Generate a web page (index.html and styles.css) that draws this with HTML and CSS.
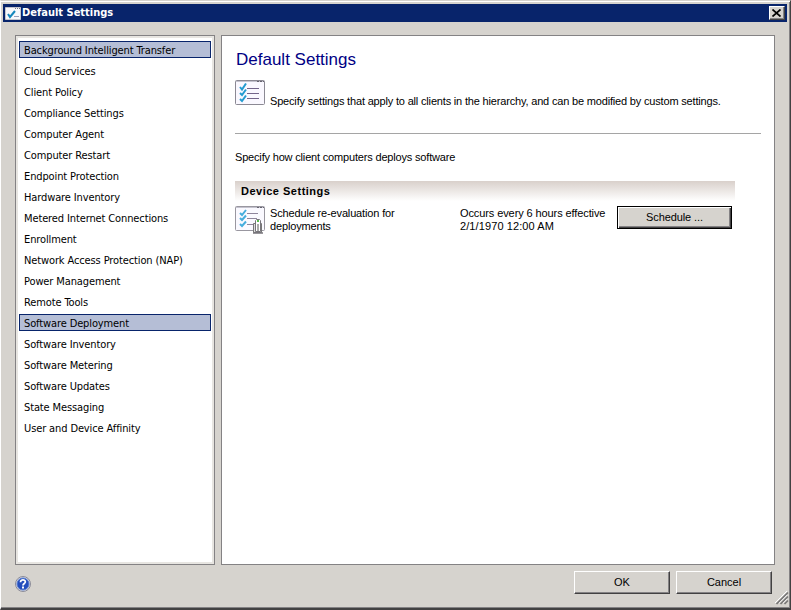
FILE: index.html
```
<!DOCTYPE html>
<html lang="en">
<head>
<meta charset="utf-8">
<title>Default Settings</title>
<link rel="stylesheet" href="styles.css">
</head>
<body>
<div class="window">
  <header class="titlebar">
    <svg class="title-icon" width="16" height="13" viewBox="0 0 16 13"><path fill="#f8f8fc" stroke="#c5c5cd" d="M.5.5h15v12H.5z"/><path stroke="#777986" stroke-dasharray="1 1" d="M10 1.5h5"/><path stroke="#9ba1bd" d="M9 9.5h5"/><path fill="none" stroke="#1687bd" stroke-width="2" d="m3 7 2 3 5-6"/></svg>
    <h1>Default Settings</h1>
    <button class="close" aria-label="Close"><svg width="9" height="8" viewBox="0 0 9 8"><path stroke="#000" stroke-width="1.7" d="m.5.5 8 7m0-7-8 7"/></svg></button>
  </header>
  <div class="body">
    <nav class="sidebar">
      <ul>
        <li class="selected">Background Intelligent Transfer</li>
        <li>Cloud Services</li><li>Client Policy</li><li>Compliance Settings</li><li>Computer Agent</li><li>Computer Restart</li><li>Endpoint Protection</li><li>Hardware Inventory</li><li>Metered Internet Connections</li><li>Enrollment</li><li>Network Access Protection (NAP)</li><li>Power Management</li><li>Remote Tools</li>
        <li class="selected">Software Deployment</li>
        <li>Software Inventory</li><li>Software Metering</li><li>Software Updates</li><li>State Messaging</li><li>User and Device Affinity</li>
      </ul>
    </nav>
    <main class="content">
      <h2>Default Settings</h2>
      <div class="intro">
        <svg width="30" height="26" viewBox="0 0 30 26"><rect x=".5" y=".5" width="29" height="24" rx="1" fill="#faf8ff" stroke="#8b8994"/><path stroke="#c4c3ce" d="M1 1.500h28"/><path stroke="#65636f" stroke-dasharray="2 1" d="M22 1.500h7"/><path stroke="#73658a" d="M12 8.500h12M12 13.500h12M12 18.500h12"/><path fill="none" stroke="#249bd0" stroke-width="2" d="m5 7 2 2.500 4-6M5 13l2 2 4-5.500M5 19l2 2 4-5.500"/></svg>
        <p>Specify settings that apply to all clients in the hierarchy, and can be modified by custom settings.</p>
      </div>
      <p class="description">Specify how client computers deploys software</p>
      <section class="settings">
        <h3>Device Settings</h3>
        <div class="row">
          <svg width="31" height="29" viewBox="0 0 31 29"><rect x=".5" y=".5" width="29" height="24" rx="1" fill="#faf9ff" stroke="#9997a0"/><path stroke="#c4c3ce" d="M1 1.500h28"/><path stroke="#65636f" stroke-dasharray="2 1" d="M22 1.500h7"/><path stroke="#8e859c" d="M12 7.500h11M12 12.500h10M12 18.500h6"/><path fill="none" stroke="#45addd" stroke-width="2" d="m5 7 2 2 4-5M5 12l2 2 4-4.500M5 18l2 2 4-4.500"/><path fill="#ddd" stroke="#777" d="M18.500 26.500v-9h8v9z"/><path fill="#fff" stroke="#77757b" d="M20.500 25.500v-11l1-1h3l1 1v11z"/><path fill="#55bb49" d="M22 14h2v2h-2z"/><path stroke="#aaa" stroke-width="2" d="M23 18v7"/><path stroke="#77757b" stroke-width="1.500" d="M18 27h10"/></svg>
          <p class="label">Schedule re-evaluation for<br>deployments</p>
          <p class="value"><span>Occurs every 6 hours effective</span><br><span class="date">2/1/1970 12:00 AM</span></p>
          <button class="btn schedule">Schedule ...</button>
        </div>
      </section>
    </main>
  </div>
  <footer>
    <svg class="help" width="16" height="16" viewBox="0 0 16 16"><circle cx="8" cy="8" r="7.500" fill="#d9dbe5" stroke="#8c8c98"/><circle cx="8" cy="8" r="6" fill="#244ebd" stroke="#5b7fd0"/><path fill="none" stroke="#fff" stroke-width="1.800" d="M5.500 6.200C5.500 3 10.500 3.200 10.300 6 10.200 7.600 8 7.500 8 9.500"/><path fill="#fff" d="M7 10.500h2v2H7z"/></svg>
    <button class="btn ok">OK</button>
    <button class="btn">Cancel</button>
    <svg class="grip" width="14" height="14" viewBox="0 0 14 14"><path stroke="#fff" d="M0 12 12 0M4 12l8-8M8 12l4-4"/><path stroke="#777" stroke-width="1.700" d="M1.500 13 13 1.500M5.500 13 13 5.500M9.500 13 13 9.500"/></svg>
  </footer>
</div>
</body>
</html>
```
FILE: styles.css
```
* { box-sizing: border-box; }
body { margin: 0; overflow: hidden; }
h1, h2, h3, p, ul { margin: 0; padding: 0; font-weight: normal; }
svg { display: block; flex: none; }
.window {
  width: 791px; height: 610px; padding: 2px 1px 0 2px;
  background: #d6d3ce;
  border-style: solid; border-width: 1px 1px 2px 1px;
  border-color: #d6d3ce #424142 #424142 #fff;
  box-shadow: inset 0 1px #fff, inset -1px -1px #848284;
  font: 11px/13px "Liberation Sans", Arial, sans-serif; color: #000;
}
.titlebar { display: flex; align-items: center; width: 784px; height: 18px; margin-top: 1px; background: #08246b; padding: 0 2px; }
.title-icon { margin-right: 1px; }
h1 { flex: 1; color: #fff; font: bold 11px/18px "DejaVu Sans Condensed", sans-serif; }
.close { width: 16px; height: 14px; padding: 0 0 0 2px; background: #d6d3ce; border: 1px solid; border-color: #fff #424142 #424142 #fff; box-shadow: inset -1px -1px #848284; }
.body { display: flex; gap: 6px; height: 530px; margin: 13px 0 0 12px; }
.sidebar { width: 200px; padding: 3px 1px; background: #fff; border: 1px solid #848284; box-shadow: inset 0 0 0 2px #e7e5e1; }
ul { list-style: none; padding: 2px 2px; }
li { height: 17px; margin-bottom: 4px; padding-left: 4px; border: 1px solid transparent; line-height: 17px; font-family: "DejaVu Sans Condensed", sans-serif; white-space: nowrap; letter-spacing: -.12px; }
.selected { background: #b5bed6; border-color: #08246b; }
.content { width: 554px; padding: 13px; background: #fff; border: 1px solid #848284; }
h2 { font-size: 17px; line-height: 21px; padding-left: 1px; color: #000084; }
.intro { display: flex; gap: 5px; height: 54px; margin-top: 10px; border-bottom: 1px solid #a5a5a5; letter-spacing: -.175px; }
.intro p { padding-top: 15px; white-space: nowrap; }
.description { margin-top: 17px; letter-spacing: -.175px; }
.settings { width: 500px; margin-top: 17px; }
h3 { height: 20px; padding-left: 6px; font-size: 11px; font-weight: bold; line-height: 20px; letter-spacing: .5px; background: linear-gradient(#d9d0cb, #fff); }
.row { display: flex; padding-top: 5px; }
.label { width: 190px; margin: 1px 0 0 4px; letter-spacing: -.15px; }
.value { width: 157px; margin-top: 1px; white-space: nowrap; letter-spacing: -.1px; }
.date { letter-spacing: .1px; }
.btn { width: 96px; height: 23px; padding: 0; background: #d6d3ce; border: 1px solid; border-color: #fff #424142 #424142 #fff; box-shadow: inset -1px -1px #848284; font: inherit; }
.schedule { width: 115px; border-color: #000; box-shadow: inset 1px 1px #fff, inset -1px -1px #424142, inset -2px -2px #848284; letter-spacing: -.1px; }
footer { display: flex; margin: 6px 0 0 12px; }
.help { margin-top: 5px; }
.ok { margin: 0 6px 0 543px; }
.grip { margin: 20px 0 0 3px; }
```
